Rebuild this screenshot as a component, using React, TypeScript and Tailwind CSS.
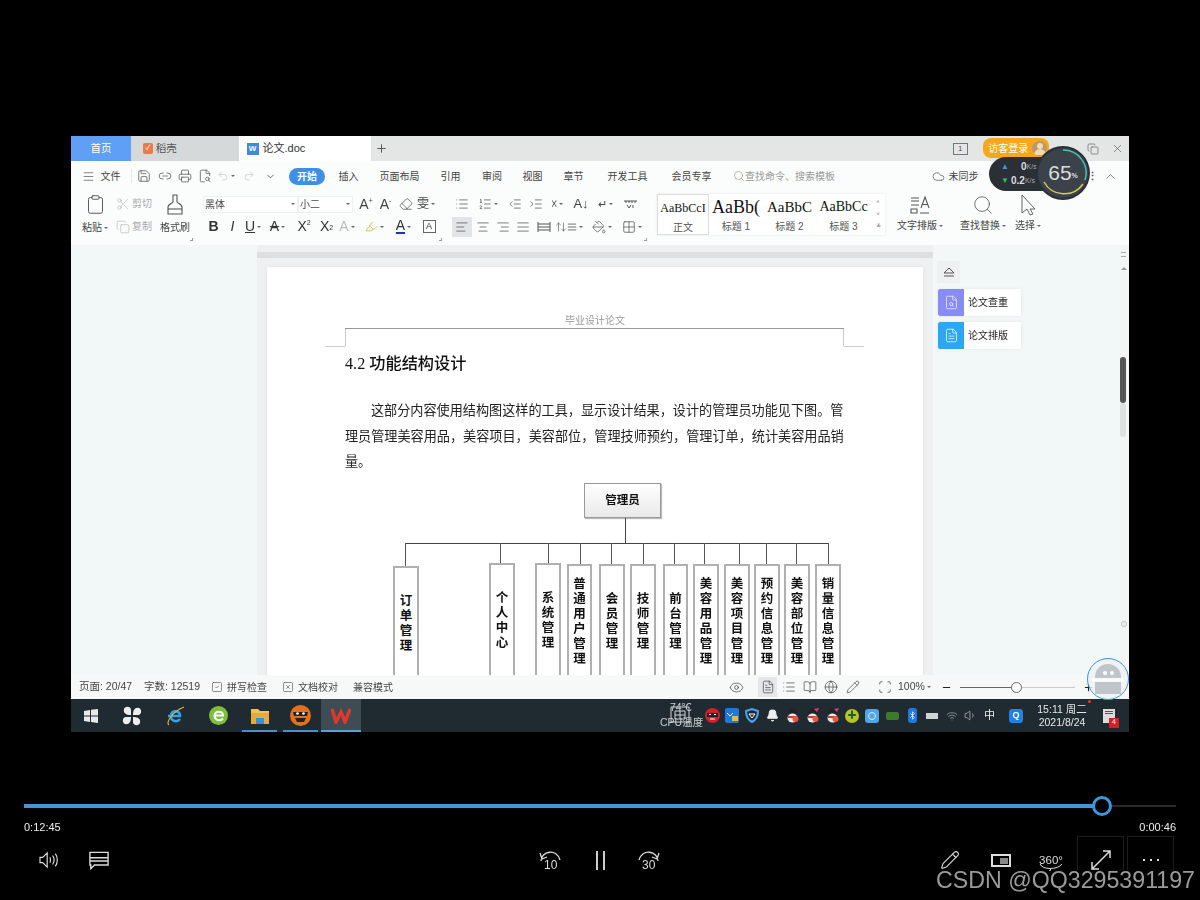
import React from "react";
import { Menu, Save, Printer, Undo2, Redo2, Scissors, Copy, Clipboard, Search, Eye, BookOpen, Globe, Scan, ChevronUp, X, Minus, Plus, MousePointer2, Cloud, ChevronDown, Bluetooth, Wifi, Volume1, FileSearch, FileText, AlignLeft, AlignCenter, AlignRight, AlignJustify, List, ListOrdered, IndentDecrease, IndentIncrease, Eraser, Pencil, PaintBucket, Grid2x2, ArrowUpDown, SquareCheck, SquareX, Highlighter, Link2, FileSearch2, Bell } from "lucide-react";

const Cell = ({ w, children, className = "" }: { w: string; children?: React.ReactNode; className?: string }) => (
  <div className={`${w} flex shrink-0 items-center justify-center ${className}`}>{children}</div>
);
const Caret = () => <span className="ml-[2px] inline-block h-0 w-0 border-x-[2px] border-t-[2px] border-x-transparent border-t-[#666] align-middle" />;
const Launcher = ({ className }: { className: string }) => <div className={`absolute bottom-[4px] h-[3px] w-[3px] border-b border-r border-[#999] ${className}`} />;
const ic = { size: 14, strokeWidth: 1.3, color: "#555" };
const TabItem = ({ w, t, className = "" }: { w: string; t: string; className?: string }) => (
  <div className={`${w} shrink-0 text-center text-[10px] text-[#444] ${className}`}>{t}</div>
);

const chartBoxes: [number, number, number, string][] = [
  [48, 26, 83, "订单管理"], [144, 26, 80, "个人中心"], [190, 26, 80, "系统管理"], [222, 25, 81, "普通用户管理"],
  [254, 26, 81, "会员管理"], [285, 26, 81, "技师管理"], [318, 25, 81, "前台管理"], [348, 26, 81, "美容用品管理"],
  [379, 26, 81, "美容项目管理"], [409, 26, 81, "预约信息管理"], [439, 26, 81, "美容部位管理"], [470, 26, 81, "销量信息管理"],
];
const drops = [60, 155, 203, 235, 266, 298, 329, 359, 394, 421, 451, 483];

function OrgChart() {
  return (
    <div className="relative mt-[8px] h-[200px]">
      <div className="absolute left-[239px] top-0 flex h-[35px] w-[77px] items-center justify-center border border-[#999] bg-gradient-to-b from-white to-[#e9e9e9] text-[11.5px] font-bold text-[#111] shadow-[1px_1px_1px_#bbb]">管理员</div>
      <div className="absolute left-[280px] top-[35px] h-[26px] w-px bg-[#444]" />
      <div className="absolute left-[60px] top-[60px] h-px w-[424px] bg-[#444]" />
      {drops.map((x, i) => (
        <div key={x} className="absolute top-[60px] w-px bg-[#555]" style={{ left: x, height: chartBoxes[i][2] - 60 }} />
      ))}
      {chartBoxes.map(([x, w, y, t]) => (
        <div key={t} className="absolute h-[130px] border-2 border-b-0 border-[#b0b0b0] bg-white" style={{ left: x, width: w, top: y }}>
          <div className="flex h-[112px] w-full flex-col items-center justify-center text-[12.5px] font-bold leading-[15px] text-[#111]">
            {t.split("").map((c, i) => <span key={i}>{c}</span>)}
          </div>
        </div>
      ))}
    </div>
  );
}

function Ribbon() {
  return (
    <div className="flex h-[54px] items-stretch bg-[#fbfcfc] text-[10px] text-[#444]">
      <div className="flex w-[41px] shrink-0 flex-col items-center pl-[7px] pt-[3px]">
        <Clipboard size={21} strokeWidth={1.1} color="#555" />
        <div className="mt-[5px] text-[10px]">粘贴<Caret /></div>
      </div>
      <div className="flex w-[47px] shrink-0 flex-col text-[#aaa]">
        <div className="mt-[5px] flex items-center gap-[2px] pl-[4px]"><Scissors size={14} strokeWidth={1} color="#aaa" /><span>剪切</span></div>
        <div className="mt-[8px] flex items-center gap-[2px] pl-[4px]"><Copy size={14} strokeWidth={1} color="#aaa" /><span>复制</span></div>
      </div>
      <div className="relative flex w-[41px] shrink-0 flex-col pt-[3px]">
        <div className="flex w-[32px] flex-col items-center">
          <svg width="18" height="22" viewBox="0 0 18 22" fill="none" stroke="#555" strokeWidth="1.1"><path d="M7 1h4v7c0 1 5 2 5 5v7H2v-7c0-3 5-4 5-5z" /><path d="M2 15h14" /></svg>
          <div className="mt-[4px] whitespace-nowrap">格式刷</div>
        </div>
        <Launcher className="right-[7px]" />
      </div>
      <div className="relative flex w-[252px] shrink-0 flex-col pl-[3px]">
        <div className="mt-[4px] flex h-[18px] items-center">
          <div className="flex h-[17px] w-[95px] items-center justify-between border border-[#f0f0f0] bg-white pl-[1px] pr-[2px]">黑体<Caret /></div>
          <div className="flex h-[17px] w-[55px] items-center justify-between border border-[#f0f0f0] bg-white pl-[1px] pr-[2px]">小二<Caret /></div>
          <Cell w="w-[20px]" className="ml-[3px] text-[14px]">A<sup className="text-[7px]">+</sup></Cell>
          <Cell w="w-[19px]" className="text-[14px]">A<sup className="text-[7px]">-</sup></Cell>
          <Cell w="w-[22px]"><Eraser {...ic} /></Cell>
          <Cell w="w-[18px]" className="text-[12px]">雯<Caret /></Cell>
        </div>
        <div className="mt-[3px] flex h-[21px] items-center text-[14px] text-[#333]">
          <Cell w="w-[1px]" />
          <Cell w="w-[19px]" className="font-bold">B</Cell>
          <Cell w="w-[19px]" className="italic">I</Cell>
          <Cell w="w-[22px]" className="underline">U<Caret /></Cell>
          <Cell w="w-[27px]" className="line-through">A<Caret /></Cell>
          <Cell w="w-[26px]">X<sup className="text-[7px]">2</sup></Cell>
          <Cell w="w-[19px]">X<sub className="text-[7px]">2</sub></Cell>
          <Cell w="w-[22px]" className="text-[#bbb]">A<Caret /></Cell>
          <Cell w="w-[33px]"><Highlighter size={13} strokeWidth={1.4} color="#c9b21c" /><Caret /></Cell>
          <Cell w="w-[25px]"><span className="border-b-2 border-[#1c2fd1] leading-[13px]">A</span><Caret /></Cell>
          <Cell w="w-[26px]"><span className="flex h-[13px] w-[13px] items-center justify-center border border-[#666] text-[9px]">A</span></Cell>
        </div>
        <Launcher className="right-[10px]" />
      </div>
      <div className="relative flex w-[205px] shrink-0 flex-col">
        <div className="mt-[4px] flex h-[18px] items-center">
          <Cell w="w-[20px]"><List {...ic} /></Cell>
          <Cell w="w-[32px]"><ListOrdered {...ic} /><Caret /></Cell>
          <Cell w="w-[22px]"><IndentDecrease {...ic} /></Cell>
          <Cell w="w-[20px]"><IndentIncrease {...ic} /></Cell>
          <Cell w="w-[22px]" className="text-[12px]">☓<Caret /></Cell>
          <Cell w="w-[26px]" className="text-[13px]">A↓</Cell>
          <Cell w="w-[22px]" className="text-[11px]">↵<Caret /></Cell>
          <Cell w="w-[28px]"><svg width="15" height="11" viewBox="0 0 15 11" fill="none" stroke="#555"><path d="M1 2h13M3 2v2M6 2v2M9 2v2M12 2v2M4 6l2 3 2-3M10 6v3" /></svg></Cell>
        </div>
        <div className="mt-[3px] flex h-[21px] items-center">
          <Cell w="w-[20px]" className="h-[20px] bg-[#e1e5e8]"><AlignLeft {...ic} /></Cell>
          <Cell w="w-[21px]"><AlignCenter {...ic} /></Cell>
          <Cell w="w-[20px]"><AlignRight {...ic} /></Cell>
          <Cell w="w-[20px]"><AlignJustify {...ic} /></Cell>
          <Cell w="w-[21px]"><svg width="14" height="12" viewBox="0 0 14 12" fill="none" stroke="#555"><path d="M1 1v10M13 1v10M1 3h12M1 6h12M1 9h12" /></svg></Cell>
          <Cell w="w-[30px]"><ArrowUpDown size={12} strokeWidth={1.3} color="#555" /><AlignJustify size={10} color="#555" /><Caret /></Cell>
          <Cell w="w-[35px]"><PaintBucket {...ic} /><Caret /></Cell>
          <Cell w="w-[26px]"><Grid2x2 {...ic} /><Caret /></Cell>
        </div>
        <Launcher className="right-[10px]" />
      </div>
      <div className="mb-[10px] mt-[3px] flex w-[228px] shrink-0 bg-white shadow-[0_0_2px_#e5e5e5]">
        <div className="flex w-[52px] flex-col items-center overflow-hidden border border-[#ddd] pt-[3px]">
          <div className="h-[20px] whitespace-nowrap font-['Liberation_Serif',serif] text-[12px] leading-[20px] text-[#111]">AaBbCcI</div>
          <div className="mt-[2px] text-[#555]">正文</div>
        </div>
        <div className="flex w-[54px] flex-col items-center overflow-hidden pt-[3px]">
          <div className="h-[20px] whitespace-nowrap font-['Liberation_Serif',serif] text-[18px] leading-[20px] text-[#111]">AaBb(</div>
          <div className="mt-[2px] text-[#555]">标题 1</div>
        </div>
        <div className="flex w-[53px] flex-col items-center overflow-hidden pt-[3px]">
          <div className="h-[20px] whitespace-nowrap font-['Liberation_Serif',serif] text-[15px] leading-[20px] text-[#111]">AaBbC</div>
          <div className="mt-[2px] text-[#555]">标题 2</div>
        </div>
        <div className="flex w-[55px] flex-col items-center overflow-hidden pt-[3px]">
          <div className="h-[20px] whitespace-nowrap font-['Liberation_Serif',serif] text-[14px] leading-[20px] text-[#111]">AaBbCc</div>
          <div className="mt-[2px] text-[#555]">标题 3</div>
        </div>
        <div className="flex flex-1 flex-col items-center justify-around py-[3px] text-[6px] text-[#777]"><span>˄</span><span>˅</span><span>≚</span></div>
      </div>
      <div className="flex w-[70px] shrink-0 flex-col items-center pt-[4px]">
        <svg width="20" height="20" viewBox="0 0 20 20" fill="none" stroke="#555" strokeWidth="1.1"><path d="M1 3h8M1 6h8M1 10h8M1 14h6v4H1zM10 18h9M11 13l4-11 4 11M12.500 9.500h5" /></svg>
        <div className="mt-[3px] whitespace-nowrap">文字排版<Caret /></div>
      </div>
      <div className="flex w-[56px] shrink-0 flex-col items-center pt-[3px]">
        <Search size={22} strokeWidth={0.9} color="#555" />
        <div className="mt-[2px] whitespace-nowrap">查找替换<Caret /></div>
      </div>
      <div className="flex w-[34px] shrink-0 flex-col items-center pt-[3px]">
        <svg width="18" height="22" viewBox="0 0 18 22" fill="none" stroke="#555" strokeWidth="0.9"><path d="M3 1l13 14h-5l3 5-3 1-3-6-5 4z" /></svg>
        <div className="mt-[2px] whitespace-nowrap">选择<Caret /></div>
      </div>
    </div>
  );
}

function DocArea() {
  return (
    <div className="relative flex h-[430px] overflow-hidden bg-[#f2f8f7]">
      <div className="w-[186px] shrink-0" />
      <div className="flex w-[676px] shrink-0 flex-col bg-[#eff0f1] pl-[10px] pr-[10px]">
        <div className="-mx-[10px] mt-[7px] h-[6px] bg-[#dedfe0]" />
        <div className="mt-[9px] h-[408px] overflow-hidden bg-white shadow-[0_0_4px_#e2e2e2]">
          <div className="h-[60px] pt-[48px] text-center font-['Liberation_Serif','Noto_Sans_CJK_SC',serif] text-[10px] leading-[12px] text-[#999]">毕业设计论文</div>
          <div className="relative ml-[78px] mt-[1px] w-[499px] border-t border-[#999]">
            <div className="absolute left-0 top-0 h-[17px] w-px bg-[#ccc]" />
            <div className="absolute -left-[20px] top-[17px] h-px w-[20px] bg-[#ccc]" />
            <div className="absolute right-0 top-0 h-[17px] w-px bg-[#ccc]" />
            <div className="absolute -right-[20px] top-[17px] h-px w-[20px] bg-[#ccc]" />
            <div className="mt-[25px] font-['Liberation_Serif','Noto_Sans_CJK_SC',serif] text-[16.2px] font-medium leading-[20px] text-[#111]">4.2 功能结构设计</div>
            <div className="mt-[24px] indent-[26px] font-['Liberation_Serif','Noto_Sans_CJK_SC',serif] text-[13.13px] leading-[25.7px] text-[#222]">这部分内容使用结构图这样的工具，显示设计结果，设计的管理员功能见下图。管理员管理美容用品，美容项目，美容部位，管理技师预约，管理订单，统计美容用品销量。</div>
            <OrgChart />
          </div>
        </div>
      </div>
      <div className="flex flex-1 flex-col pl-[4px] pt-[16px] text-[10px] text-[#222]">
        <div className="flex h-[22px] w-[23px] items-center justify-center bg-[#eef0f1]">
          <svg width="12" height="10" viewBox="0 0 12 10" fill="none" stroke="#555"><path d="M1 6l5-5 5 5zM1 9h10" /></svg>
        </div>
        <div className="ml-[1px] mt-[6px] flex h-[27px] w-[83px] items-center bg-white shadow-[0_0_3px_#e3e3e3]">
          <div className="flex h-full w-[26px] items-center justify-center rounded-l-[2px] bg-[#8a8cf5]"><FileSearch size={15} color="#e8e8ff" strokeWidth={1.3} /></div>
          <span className="ml-[4px]">论文查重</span>
        </div>
        <div className="ml-[1px] mt-[6px] flex h-[27px] w-[83px] items-center bg-white shadow-[0_0_3px_#e3e3e3]">
          <div className="flex h-full w-[26px] items-center justify-center rounded-l-[2px] bg-[#2ea7f3]"><FileText size={15} color="#e8f6ff" strokeWidth={1.3} /></div>
          <span className="ml-[4px]">论文排版</span>
        </div>
      </div>
      <div className="absolute bottom-0 right-0 top-0 w-[10px] bg-[#f4f6f6]">
        <div className="absolute left-[1px] top-[112px] h-[46px] w-[6px] rounded-[3px] bg-[#555]" />
        <div className="absolute left-[1px] top-[158px] h-[34px] w-[6px] rounded-[3px] bg-[#dfe1e1]" />
        <div className="absolute left-[2px] top-[7px] h-[5px] w-[5px] border-y border-[#aaa]" />
        <div className="absolute left-[2px] top-[22px] h-0 w-0 border-x-[3px] border-b-[3px] border-x-transparent border-b-[#999]" />
        <div className="absolute left-[2px] top-[376px] h-[6px] w-[6px] rounded-full border border-[#bbb]" />
      </div>
    </div>
  );
}

function StatusBar() {
  return (
    <div className="flex h-[24px] items-center bg-[#f7f9f8] pl-[8px] text-[10.5px] text-[#444]">
      <span className="w-[65px] shrink-0">页面: 20/47</span>
      <span className="w-[67px] shrink-0">字数: 12519</span>
      <SquareCheck size={12} strokeWidth={1.2} color="#444" />
      <span className="ml-[4px] w-[55px] shrink-0 text-[10px]">拼写检查</span>
      <SquareX size={12} strokeWidth={1.2} color="#444" />
      <span className="ml-[4px] w-[55px] shrink-0 text-[10px]">文档校对</span>
      <span className="w-[40px] shrink-0 text-[10px]">兼容模式</span>
      <div className="w-[333px] shrink-0" />
      <Cell w="w-[20px]"><Eye size={15} strokeWidth={1.2} color="#444" /></Cell>
      <div className="w-[12px] shrink-0" />
      <Cell w="w-[19px]" className="h-[20px] bg-[#e4e8ea]"><FileText size={14} strokeWidth={1.2} color="#444" /></Cell>
      <Cell w="w-[23px]"><List size={14} strokeWidth={1.2} color="#444" /></Cell>
      <Cell w="w-[20px]"><BookOpen size={14} strokeWidth={1.2} color="#444" /></Cell>
      <Cell w="w-[22px]"><Globe size={14} strokeWidth={1.2} color="#444" /></Cell>
      <Cell w="w-[22px]"><Pencil size={14} strokeWidth={1.2} color="#444" /></Cell>
      <div className="w-[14px] shrink-0" />
      <Cell w="w-[14px]"><Scan size={14} strokeWidth={1.3} color="#444" /></Cell>
      <span className="ml-[6px] w-[41px] shrink-0">100%<Caret /></span>
      <Cell w="w-[14px]"><Minus size={11} strokeWidth={2.4} color="#222" /></Cell>
      <div className="relative ml-[7px] h-px w-[115px] shrink-0 bg-[#ccc]">
        <div className="h-px w-[56px] bg-[#666]" />
        <div className="absolute left-[51px] top-[-5px] h-[11px] w-[11px] rounded-full border border-[#666] bg-white" />
      </div>
      <Cell w="w-[14px]" className="ml-[6px]"><Plus size={11} strokeWidth={2.4} color="#222" /></Cell>
    </div>
  );
}

const Penguin = ({ pink = false }: { pink?: boolean }) => (
  <Cell w="w-[20px]">
    <svg width="13" height="15" viewBox="0 0 13 15">
      <ellipse cx="6.500" cy="5" rx="4" ry="4.500" fill="#222" />
      <ellipse cx="6.500" cy="10" rx="5" ry="4.500" fill="#e8e8e8" />
      <path d="M2 8h9v2H2z" fill="#d43a2a" />
      <circle cx="9.500" cy="11" r="3" fill="#e5573f" />
      {pink ? <path d="M8 1l5-1-2 4z" fill="#e8308f" /> : null}
    </svg>
  </Cell>
);

function TrayIcons() {
  return (
    <div className="flex items-center">
      <Cell w="w-[20px]"><svg width="15" height="15" viewBox="0 0 15 15"><circle cx="7.500" cy="7.500" r="7.500" fill="#d3212c" /><path d="M2 5h11v4H2z" fill="#222" /><path d="M4 6.500h2M9 6.500h2M5 11h5" stroke="#fff" /></svg></Cell>
      <Cell w="w-[20px]"><svg width="14" height="15" viewBox="0 0 14 15"><rect width="14" height="15" rx="2" fill="#1f78d1" /><path d="M2 5l3 3 3-3" stroke="#fff" fill="none" /><rect x="7" y="8" width="6" height="5" fill="#e8b93a" /></svg></Cell>
      <Cell w="w-[20px]"><svg width="14" height="15" viewBox="0 0 14 15" fill="none" stroke="#4aa3f0" strokeWidth="2"><path d="M1 3l6-2 6 2c0 5-2 9-6 11C3 12 1 8 1 3z" /><path d="M4 6h6l-3 4z" stroke="#fff" strokeWidth="1" /></svg></Cell>
      <Cell w="w-[20px]"><Bell size={13} fill="#eee" color="#eee" /></Cell>
      <Penguin />
      <Penguin pink />
      <Penguin pink />
      <Cell w="w-[20px]"><div className="flex h-[14px] w-[14px] items-center justify-center rounded-full bg-[#b8c520] text-[9px] font-bold leading-none text-[#1a5c2a]">✚</div></Cell>
      <Cell w="w-[20px]"><div className="flex h-[14px] w-[14px] items-center justify-center rounded-[3px] bg-[#4ea6e8]"><div className="h-[8px] w-[8px] rounded-full border border-[#d8eeff]" /></div></Cell>
      <Cell w="w-[20px]"><div className="h-[8px] w-[13px] rounded-[2px] bg-[#3f7a2a]" /></Cell>
      <Cell w="w-[20px]"><div className="flex h-[15px] w-[9px] items-center justify-center rounded-[3px] bg-[#1f7ae0]"><Bluetooth size={9} color="#fff" /></div></Cell>
      <Cell w="w-[20px]"><div className="h-[6px] w-[12px] bg-[#cfd4d6]" /></Cell>
      <Cell w="w-[19px]"><Wifi size={12} color="#9aa3a8" strokeWidth={1.5} /></Cell>
      <Cell w="w-[19px]"><Volume1 size={13} color="#cfd4d6" strokeWidth={1.2} /></Cell>
      <Cell w="w-[19px]" className="text-[11px] text-[#eee]">中</Cell>
      <Cell w="w-[24px]" className="ml-[5px]"><div className="flex h-[14px] w-[14px] items-center justify-center rounded-[3px] bg-[#1f82e6] text-[9px] font-bold">Q</div></Cell>
    </div>
  );
}

function Taskbar() {
  return (
    <div className="relative flex h-[33px] items-center bg-[#1f2a31] text-white">
      <Cell w="w-[40px]"><svg width="14" height="14" viewBox="0 0 14 14" fill="#e8e8e8"><path d="M0 2l6-1v5.500H0zM7 .8L14 0v6.500H7zM0 7.500h6V13l-6-1zM7 7.500h7V14l-7-1z" /></svg></Cell>
      <Cell w="w-[41px]"><svg width="20" height="20" viewBox="0 0 20 20" fill="#eee"><path d="M9 9C4 9 1 7 2 3c1-3 7-3 7 1zM11 9c0-5 2-8 6-7 3 1 3 7-1 7zM11 11c5 0 8 2 7 6-1 3-7 3-7-1zM9 11c0 5-2 8-6 7-3-1-3-7 1-7z" /></svg></Cell>
      <Cell w="w-[45px]"><svg width="20" height="20" viewBox="0 0 20 20" fill="none"><path d="M3 10h12c0-6-8-6-9-1-1 6 6 8 9 4" stroke="#35a0e6" strokeWidth="2.600" /><path d="M4 19c-4-2 4-14 15-18" stroke="#e3b23c" strokeWidth="1.200" /></svg></Cell>
      <Cell w="w-[42px]"><svg width="19" height="19" viewBox="0 0 19 19" fill="none"><circle cx="9.500" cy="9.500" r="9.500" fill="#7cbf3a" /><path d="M5 9.500h9c0-5-8-5-8.500 0 0 5 6 6 8.500 3" stroke="#fff" strokeWidth="2" /></svg></Cell>
      <Cell w="w-[41px]" className="relative h-full">
        <svg width="18" height="16" viewBox="0 0 18 16"><path d="M0 1h7l2 2h9v13H0z" fill="#f1c24f" /><path d="M0 5h18v11H0z" fill="#e6a93a" /><path d="M5 10h8v6H5z" fill="#3a8fd6" /></svg>
        <div className="absolute bottom-0 left-[3px] right-[3px] h-[2px] bg-[#4a90c4]" />
      </Cell>
      <Cell w="w-[41px]" className="relative h-full">
        <svg width="21" height="21" viewBox="0 0 21 21"><circle cx="10.500" cy="10.500" r="10.500" fill="#e2701c" /><path d="M3 7h15l-1 4H4z" fill="#222" /><circle cx="7.500" cy="8.500" r="1.300" fill="#fff" /><circle cx="13.500" cy="8.500" r="1.300" fill="#fff" /><path d="M5 13h11l-2 4H7z" fill="#222" /></svg>
        <div className="absolute bottom-0 left-[3px] right-[3px] h-[2px] bg-[#4a90c4]" />
      </Cell>
      <Cell w="w-[40px]" className="relative h-full bg-[#3f4c54]">
        <svg width="20" height="16" viewBox="0 0 20 16" fill="none" stroke="#e0392b" strokeWidth="3.400"><path d="M1 1l4 13 5-10 4 10 5-13" /></svg>
        <div className="absolute bottom-0 left-0 right-0 h-[2px] bg-[#5aa0d0]" />
      </Cell>
      <div className="relative ml-[299px] h-full w-[42px] shrink-0 text-center text-[10.5px] leading-[15px] text-[#ccc]">
        <div className="pt-[1px]">74℃</div>
        <div className="whitespace-nowrap">CPU温度</div>
        <svg className="absolute left-[10px] top-[7px]" width="20" height="17" viewBox="0 0 20 17" fill="none" stroke="#d5d5d5"><path d="M1 1h18v15H1zM5 5h10v8H5zM5 9h10M10 5v8" /></svg>
      </div>
      <TrayIcons />
      <div className="ml-[8px] w-[52px] shrink-0 text-center text-[10.5px] leading-[13px] text-[#e6e6e6]">
        <div>15:11 周二</div>
        <div>2021/8/24</div>
      </div>
      <div className="relative ml-[15px] flex h-[14px] w-[12px] shrink-0 flex-col gap-[1px] bg-[#dcdcdc] p-[2px]">
        <div className="h-px bg-[#555]" /><div className="h-px bg-[#555]" />
        <div className="absolute -bottom-[5px] -right-[4px] flex h-[10px] w-[10px] items-center justify-center bg-[#d62020] text-[7px] text-white">4</div>
      </div>
      <div className="absolute left-[1017px] top-[1px] h-[3px] w-[3px] rounded-full bg-[#e33]" />
    </div>
  );
}

function Player() {
  return (
    <div className="relative flex flex-1 flex-col px-[24px] pt-[72px] text-white">
      <div className="relative flex h-[4px] w-[1152px] items-center">
        <div className="h-[4px] w-[1069px] bg-[#3c97dd]" />
        <div className="h-[2px] flex-1 bg-[#2a2a2a]" />
        <div className="absolute left-[1068px] top-[-8px] h-[20px] w-[20px] rounded-full border-[3px] border-[#3c97dd] bg-black" />
      </div>
      <div className="mt-[13px] flex justify-between text-[11px] leading-[13px] text-[#eee]">
        <span>0:12:45</span><span>0:00:46</span>
      </div>
      <div className="mt-[7px] flex h-[38px] items-center">
        <Cell w="w-[30px]" className="ml-[10px]">
          <svg width="20" height="18" viewBox="0 0 22 20" fill="none" stroke="#ddd" strokeWidth="1.300"><path d="M1 7h3l5-5v16l-5-5H1zM12 7c1 2 1 4 0 6M15 5c2 3 2 7 0 10M18 3c3 4 3 10 0 14" /></svg>
        </Cell>
        <Cell w="w-[24px]" className="ml-[23px]">
          <svg width="20" height="19" viewBox="0 0 22 20" fill="none" stroke="#ddd" strokeWidth="1.500"><path d="M1 1h20v14H6l-4 4v-4H1zM1 7h20M1 10.500h20" /></svg>
        </Cell>
        <div className="w-[426px] shrink-0" />
        <Cell w="w-[26px]" className="relative h-[24px]">
          <svg className="absolute left-[2px] top-0" width="22" height="14" viewBox="0 0 22 14" fill="none" stroke="#ddd" strokeWidth="1.300"><path d="M2 13C2 3 18 0 21 12M1 5l2 6 5-2" /></svg>
          <span className="absolute left-[7px] top-[9px] text-[12px] leading-[16px] text-[#ddd]">10</span>
        </Cell>
        <Cell w="w-[26px]" className="ml-[24px] gap-[5px]">
          <div className="h-[19px] w-[2px] bg-[#ccc]" /><div className="h-[19px] w-[2px] bg-[#ccc]" />
        </Cell>
        <Cell w="w-[26px]" className="relative ml-[24px] h-[24px]">
          <svg className="absolute left-[1px] top-0" width="22" height="14" viewBox="0 0 22 14" fill="none" stroke="#ddd" strokeWidth="1.300"><path d="M20 13C20 3 4 0 1 12M21 5l-2 6-5-2" /></svg>
          <span className="absolute left-[5px] top-[9px] text-[12px] leading-[16px] text-[#ddd]">30</span>
        </Cell>
        <div className="w-[275px] shrink-0" />
        <Cell w="w-[24px]"><Pencil size={20} strokeWidth={1.3} color="#ddd" /></Cell>
        <Cell w="w-[20px]" className="ml-[29px]">
          <div className="flex h-[13px] w-[20px] items-end justify-end border-2 border-[#ddd] p-[1px]"><div className="h-[6px] w-[8px] bg-[#888]" /></div>
        </Cell>
        <Cell w="w-[24px]" className="relative ml-[28px] h-[22px]">
          <span className="text-[11.5px] leading-[12px] text-[#ddd]">360°</span>
          <svg className="absolute bottom-0 left-0" width="24" height="8" viewBox="0 0 24 8" fill="none" stroke="#ddd"><path d="M1 1c2 6 18 6 22 0M12 7l-2-2M12 7l-2 1" /></svg>
        </Cell>
        <Cell w="w-[47px]" className="ml-[14px]">
          <svg width="20" height="20" viewBox="0 0 20 20" fill="none" stroke="#ddd" strokeWidth="1.500"><path d="M1 19L19 1M12 1h7v7M1 12v7h7" /></svg>
        </Cell>
        <Cell w="w-[47px]" className="ml-[3px] gap-[5px]">
          <div className="h-[2px] w-[2px] bg-[#ddd]" /><div className="h-[2px] w-[2px] bg-[#ddd]" /><div className="h-[2px] w-[2px] bg-[#ddd]" />
        </Cell>
      </div>
      <div className="absolute left-[1077px] top-[104px] h-[34px] w-[47px] border border-b-0 border-[#1c1c1c]" />
      <div className="absolute left-[1127px] top-[104px] h-[34px] w-[47px] border border-b-0 border-[#1c1c1c]" />
      <div className="absolute left-[936px] top-[134px] whitespace-nowrap font-['Liberation_Sans',sans-serif] text-[23.2px] leading-[28px] text-[#ababab]/90">CSDN @QQ3295391197</div>
    </div>
  );
}

export default function App() {
  return (
    <div className="flex h-[900px] w-[1200px] flex-col overflow-hidden bg-black font-['Liberation_Sans','Noto_Sans_CJK_SC',sans-serif]">
      <div className="h-[136px] shrink-0" />
      <div className="relative ml-[71px] flex h-[596px] w-[1058px] shrink-0 flex-col blur-[0.35px]">
        <div className="flex h-[25px] items-stretch bg-[#e3e6e4] text-[10.5px]">
          <div className="flex w-[60px] items-center justify-center bg-[#5f9ff5] text-white">首页</div>
          <div className="flex w-[108px] items-center bg-[#d6d9da] pl-[12px] text-[#555]">
            <div className="flex h-[11px] w-[10px] items-center justify-center rounded-[2px] bg-[#ee7a4a] text-[7px] text-white">✓</div>
            <span className="ml-[3px]">稻壳</span>
          </div>
          <div className="flex w-[133px] items-center bg-white pl-[8px] text-[#333]">
            <div className="flex h-[12px] w-[12px] items-center justify-center bg-[#3f87e8] text-[8px] font-bold text-white">W</div>
            <span className="ml-[4px] text-[11px]">论文.doc</span>
          </div>
          <Cell w="w-[20px]"><Plus size={13} strokeWidth={1.8} color="#555" /></Cell>
          <div className="w-[561px] shrink-0" />
          <Cell w="w-[16px]"><div className="flex h-[12px] w-[15px] items-center justify-center border border-[#777] text-[8px] leading-none text-[#555]">1</div></Cell>
          <div className="ml-[15px] mt-[2px] flex h-[20px] w-[66px] items-center justify-between rounded-[8px] bg-[#f5a81c] pl-[5px] pr-[2px] text-[10px] text-white">
            访客登录
            <div className="flex h-[15px] w-[15px] flex-col items-center overflow-hidden rounded-full bg-[#b99a68]">
              <div className="mt-[2px] h-[6px] w-[6px] rounded-full bg-[#f0dcb0]" />
              <div className="h-[6px] w-[12px] rounded-t-[6px] bg-[#f0dcb0]" />
            </div>
          </div>
          <Cell w="w-[22px]" className="ml-[10px]"><Minus size={12} strokeWidth={1.2} color="#666" /></Cell>
          <Cell w="w-[24px]"><Copy size={12} strokeWidth={1.2} color="#555" /></Cell>
          <Cell w="w-[24px]"><X size={13} strokeWidth={1.2} color="#555" /></Cell>
        </div>
        <div className="flex h-[30px] items-center bg-[#fbfcfc]">
          <Cell w="w-[29px]" className="pl-[5px]"><Menu size={13} strokeWidth={1.3} color="#555" /></Cell>
          <TabItem w="w-[21px]" t="文件" />
          <div className="ml-[10px] h-[14px] w-px bg-[#e5e5e5]" />
          <Cell w="w-[21px]" className="ml-[1px]"><Save {...ic} /></Cell>
          <Cell w="w-[21px]"><Link2 {...ic} /></Cell>
          <Cell w="w-[19px]"><Printer {...ic} /></Cell>
          <Cell w="w-[21px]"><FileSearch2 {...ic} /></Cell>
          <Cell w="w-[22px]"><Undo2 size={12} strokeWidth={1.2} color="#bbb" /><Caret /></Cell>
          <Cell w="w-[24px]"><Redo2 size={12} strokeWidth={1.2} color="#bbb" /></Cell>
          <Cell w="w-[18px]"><ChevronDown size={11} color="#666" /></Cell>
          <div className="ml-[10px] flex h-[17px] w-[36px] shrink-0 items-center justify-center rounded-full bg-[#3d8fe8] text-[10px] font-semibold text-white">开始</div>
          <TabItem w="w-[21px]" t="插入" className="ml-[13px]" />
          <TabItem w="w-[41px]" t="页面布局" className="ml-[20px]" />
          <TabItem w="w-[21px]" t="引用" className="ml-[20px]" />
          <TabItem w="w-[20px]" t="审阅" className="ml-[21px]" />
          <TabItem w="w-[21px]" t="视图" className="ml-[20px]" />
          <TabItem w="w-[21px]" t="章节" className="ml-[20px]" />
          <TabItem w="w-[41px]" t="开发工具" className="ml-[23px]" />
          <TabItem w="w-[41px]" t="会员专享" className="ml-[23px]" />
          <Cell w="w-[13px]" className="ml-[20px]"><Search size={12} strokeWidth={1.2} color="#888" /></Cell>
          <span className="w-[92px] shrink-0 whitespace-nowrap text-[10px] text-[#999]">查找命令、搜索模板</span>
          <Cell w="w-[15px]" className="ml-[94px]"><Cloud size={13} strokeWidth={1.3} color="#555" /></Cell>
          <TabItem w="w-[31px]" t="未同步" className="ml-[2px]" />
          <Cell w="w-[16px]" className="ml-[123px]"><ChevronUp size={15} strokeWidth={1.2} color="#555" /></Cell>
        </div>
        <Ribbon />
        <DocArea />
        <StatusBar />
        <Taskbar />

        <div className="absolute left-[1016px] top-[35px] text-[11px] font-bold leading-[10px] text-[#555]">⋮</div>
        <div className="absolute left-[918px] top-[21px] flex h-[34px] w-[60px] flex-col justify-center rounded-l-[17px] bg-[#2a3036] pl-[12px] text-[10px] font-bold leading-[14px] text-[#ddd]">
          <div className="flex items-center"><span className="w-[18px] text-[8px] text-[#3f96e0]">▲</span><span className="ml-[2px]">0</span><span className="text-[7px] font-normal text-[#aaa]">K/s</span></div>
          <div className="flex items-center"><span className="w-[10px] text-[8px] text-[#3fb950]">▼</span>0.2<span className="text-[7px] font-normal text-[#aaa]">K/s</span></div>
        </div>
        <div className="absolute left-[967px] top-[12px] flex h-[50px] w-[50px] items-center justify-center rounded-full bg-[#3c4249] text-[21px] text-[#ddd] shadow-[0_0_0_2px_#2a3036]">
          <svg className="absolute inset-0" width="50" height="50" viewBox="0 0 50 50" fill="none" strokeWidth="1.500"><path d="M25 2a23 23 0 0 1 22 30" stroke="#47c1b5" /><path d="M45 36a23 23 0 0 1-39-2" stroke="#d7c85a" /></svg>
          65<span className="mt-[7px] text-[7px] font-bold">%</span>
        </div>
        <div className="absolute left-[1016px] top-[522px] flex h-[42px] w-[42px] items-center justify-center rounded-full border border-[#3d8fe8] bg-[#eef2f5]/80">
          <div className="flex h-[30px] w-[26px] flex-col items-center rounded-t-[13px] bg-[#bfc5c9] pt-[7px]">
            <div className="flex gap-[3px]"><div className="h-[4px] w-[4px] rounded-full bg-white" /><div className="h-[4px] w-[4px] rounded-full bg-white" /></div>
            <div className="mt-[3px] h-[4px] w-[32px] rounded-[2px] bg-white/90" />
          </div>
        </div>
      </div>
      <Player />
    </div>
  );
}
